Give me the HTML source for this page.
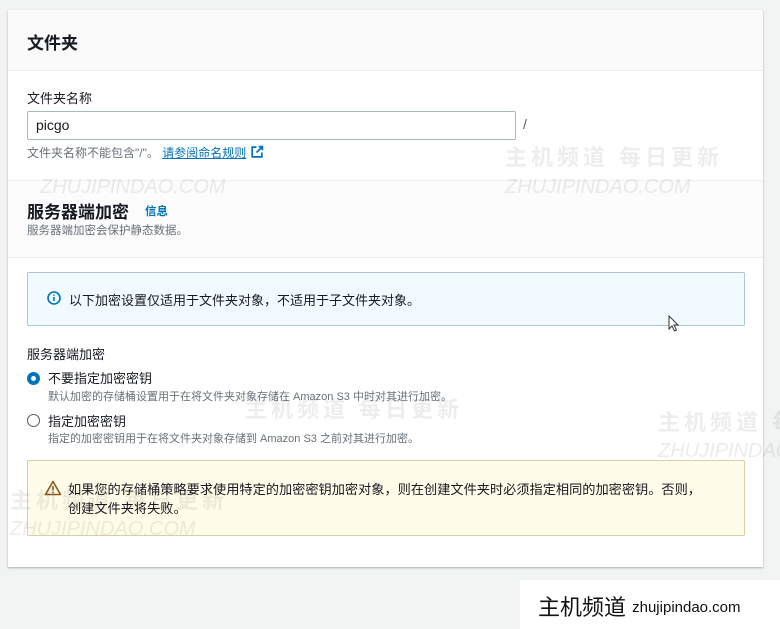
<!DOCTYPE html>
<html><head><meta charset="utf-8"><style>
body{margin:0;width:780px;height:629px;background:#f2f3f3;font-family:"Liberation Sans","Noto Sans CJK SC",sans-serif;color:#16191f;position:relative;overflow:hidden}
.card{position:absolute;left:8px;top:10px;width:755px;height:557px;background:#fff;box-shadow:0 1px 2px rgba(0,0,0,.3);}
.abs{position:absolute}
.wm{position:absolute;color:rgba(0,0,0,.07);font-weight:bold;font-size:22px;letter-spacing:4px;white-space:nowrap}
.wm2{position:absolute;color:rgba(0,0,0,.08);font-style:italic;font-size:20px;white-space:nowrap}
</style></head><body>
<div class="card">
 <div class="abs" style="left:0;top:0;width:755px;height:60px;background:#fafafa;border-bottom:1px solid #eaeded"></div>
 <div class="abs" style="left:19px;top:19px;font-size:17px;font-weight:bold">文件夹</div>
 <div class="abs" style="left:19px;top:78px;font-size:13px">文件夹名称</div>
 <div class="abs" style="left:19px;top:101px;width:489px;height:29px;border:1px solid #aab7b8;border-radius:2px;box-sizing:border-box;font-size:14px;padding:5px 8px">picgo</div>
 <div class="abs" style="left:515px;top:106px;font-size:14px;color:#545b64">/</div>
 <div class="abs" style="left:19px;top:134px;font-size:12px;color:#687078">文件夹名称不能包含"/"。 <span style="color:#0073bb;text-decoration:underline">请参阅命名规则</span> <svg width="14" height="14" viewBox="0 0 13 13" style="vertical-align:-2px"><path d="M6 2H2v9h9V7M8 1.5h3.5V5M11.5 1.5L6 7" stroke="#0073bb" stroke-width="1.6" fill="none"/></svg></div>
 <div class="abs" style="left:0;top:170px;width:755px;height:76px;background:#fcfcfc;border-top:1px solid #f0f0f0;border-bottom:1px solid #eaeded"></div>
 <div class="abs" style="left:19px;top:188px;font-size:17px;font-weight:bold">服务器端加密</div>
 <div class="abs" style="left:137px;top:193px;font-size:11.5px;font-weight:bold;color:#0073bb">信息</div>
 <div class="abs" style="left:19px;top:212px;font-size:11.5px;color:#687078">服务器端加密会保护静态数据。</div>
 <div class="abs" style="left:19px;top:262px;width:718px;height:54px;box-sizing:border-box;background:#f1faff;border:1px solid #a9c5d6;border-radius:2px"></div>
 <svg class="abs" style="left:39px;top:281px" width="14" height="14" viewBox="0 0 14 14"><circle cx="7" cy="7" r="6" stroke="#0073bb" stroke-width="1.6" fill="none"/><path d="M7 6v4M7 3.5v1.2" stroke="#0073bb" stroke-width="1.6"/></svg>
 <div class="abs" style="left:61px;top:280px;font-size:13px">以下加密设置仅适用于文件夹对象，不适用于子文件夹对象。</div>
 <div class="abs" style="left:19px;top:334px;font-size:13px">服务器端加密</div>
 <div class="abs" style="left:19px;top:362px;width:13px;height:13px;border-radius:50%;border:4px solid #0073bb;box-sizing:border-box"></div>
 <div class="abs" style="left:40px;top:358px;font-size:13px">不要指定加密密钥</div>
 <div class="abs" style="left:40px;top:378px;font-size:11px;color:#687078">默认加密的存储桶设置用于在将文件夹对象存储在 Amazon S3 中时对其进行加密。</div>
 <div class="abs" style="left:19px;top:404px;width:13px;height:13px;border-radius:50%;border:1px solid #545b64;box-sizing:border-box"></div>
 <div class="abs" style="left:40px;top:401px;font-size:13px">指定加密密钥</div>
 <div class="abs" style="left:40px;top:420px;font-size:11px;color:#687078">指定的加密密钥用于在将文件夹对象存储到 Amazon S3 之前对其进行加密。</div>
 <div class="abs" style="left:19px;top:450px;width:718px;height:76px;box-sizing:border-box;background:#fffce9;border:1px solid #d8cfa5;border-radius:2px"></div>
 <svg class="abs" style="left:36px;top:470px" width="18" height="16" viewBox="0 0 18 16"><path d="M9 1.5L1.5 14.5h15z" stroke="#8a5a1e" stroke-width="1.6" fill="none" stroke-linejoin="round"/><path d="M9 6v4.5M9 11.8v1.2" stroke="#8a5a1e" stroke-width="1.6"/></svg>
 <div class="abs" style="left:60px;top:470px;font-size:13.2px;line-height:19px;width:680px">如果您的存储桶策略要求使用特定的加密密钥加密对象，则在创建文件夹时必须指定相同的加密密钥。否则，<br>创建文件夹将失败。</div>
</div>
<div class="wm" style="left:505px;top:140px">主机频道 每日更新</div>
<div class="wm2" style="left:505px;top:176px">ZHUJIPINDAO.COM</div>
<div class="wm2" style="left:40px;top:176px">ZHUJIPINDAO.COM</div>
<div class="wm" style="left:245px;top:392px">主机频道 每日更新</div>
<div class="wm" style="left:658px;top:405px">主机频道 每</div>
<div class="wm2" style="left:658px;top:440px">ZHUJIPINDAO</div>
<div class="wm" style="left:10px;top:483px">主机频道 每日更新</div>
<div class="wm2" style="left:10px;top:518px">ZHUJIPINDAO.COM</div>
<svg class="abs" style="left:668px;top:315px" width="12" height="18" viewBox="0 0 12 18"><path d="M1 1v13l3-3 2.5 5 2-1-2.5-5h4z" fill="#fff" stroke="#333" stroke-width="1"/></svg>
<div class="abs" style="left:520px;top:580px;width:260px;height:49px;background:#fff"></div>
<div class="abs" style="left:538px;top:590px;font-size:22px;color:#111;white-space:nowrap">主机频道 <span style="font-size:15px;vertical-align:3px">zhujipindao.com</span></div>
</body></html>
